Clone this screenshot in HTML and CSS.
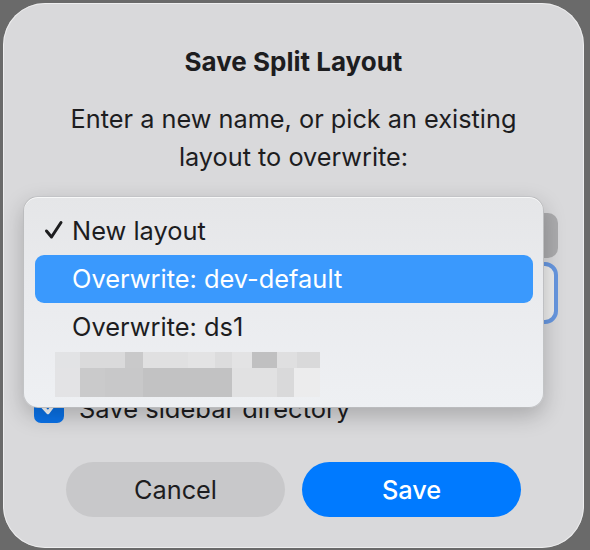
FILE: index.html
```html
<!DOCTYPE html>
<html lang="en">
<head>
    <meta charset="UTF-8">
    <meta name="viewport" content="width=device-width, initial-scale=1.0">
    <title>Save Split Layout</title>
    <link rel="stylesheet" href="styles.css">
</head>
<body>
    <div class="dialog">
        <h1 class="title">Save Split Layout</h1>
        <p class="message">Enter a new name, or pick an existing<br>layout to overwrite:</p>

        <div class="controls">
            <div class="popup-button"></div>
            <div class="name-field"></div>
            <div class="check-row faded">
                <span class="checkbox"></span>
            </div>
            <label class="check-row">
                <span class="checkbox">
                    <svg width="30" height="30" viewBox="0 0 30 30"><path d="M8.5 13.5 L14 19.5 L21.5 9.5" fill="none" stroke="#fff" stroke-width="3.4" stroke-linecap="round" stroke-linejoin="round"/></svg>
                </span>
                <span>Save sidebar directory</span>
            </label>
        </div>

        <div class="buttons">
            <button class="btn btn-cancel">Cancel</button>
            <button class="btn btn-save">Save</button>
        </div>

        <!-- open popup menu, drawn over the form -->
        <div class="menu">
            <div class="menu-item">
                <svg class="tick" width="20" height="20" viewBox="0 0 20 20"><path d="M2.5 11 L7.5 17 L17 2.5" fill="none" stroke="#1d1d1f" stroke-width="3" stroke-linecap="round" stroke-linejoin="round"/></svg>
                New layout
            </div>
            <div class="menu-item active">Overwrite: dev-default</div>
            <div class="menu-item">Overwrite: ds1</div>
            <div class="redacted">
                <div class="redacted-top"></div>
                <div class="redacted-bottom"></div>
            </div>
        </div>
    </div>
</body>
</html>
```

FILE: styles.css
```css
body {
    margin: 0;
    padding: 3px;
    background-color: #6a6a6a;
    font-family: 'Inter', 'Noto Sans', sans-serif;
    color: #1d1d1f;
}

.dialog {
    position: relative;
    box-sizing: border-box;
    width: 581px;
    height: 545px;
    padding-top: 46px;
    background-color: #d9d9db;
    border-radius: 42px;
    box-shadow: inset 0 0 0 1px rgba(255, 255, 255, 0.55);
    display: flex;
    flex-direction: column;
    align-items: center;
}

.title {
    margin: 0;
    font-size: 26px;
    line-height: 26px;
    font-weight: 700;
}

.message {
    margin: 25px 0 0;
    font-size: 25.3px;
    line-height: 38px;
    text-align: center;
}

.controls {
    align-self: stretch;
    margin: 37px 26px 0 27px;
    display: flex;
    flex-direction: column;
}

.popup-button {
    height: 45px;
    border-radius: 10px;
    background-color: #ababad;
}

.name-field {
    margin-top: 4px;
    height: 54px;
    border: 4px solid #6797e0;
    border-radius: 13px;
    background-color: #ececec;
}

.check-row {
    display: flex;
    align-items: center;
    gap: 15px;
    margin-left: 4px;
    height: 30px;
    font-size: 25.5px;
}

.check-row.faded {
    margin-top: 18px;
}

.check-row + .check-row {
    margin-top: 21px;
}

.checkbox {
    width: 30px;
    height: 30px;
    border-radius: 7px;
    background-color: #0a72e8;
    display: flex;
}

.faded .checkbox {
    background-color: #a9d1f7;
}

.buttons {
    display: flex;
    gap: 17px;
    margin-top: 39px;
}

.btn {
    width: 219px;
    height: 55px;
    border: none;
    border-radius: 28px;
    font-family: inherit;
    font-size: 25.3px;
}

.btn-cancel {
    background-color: #c8c8ca;
    color: #1d1d1f;
}

.btn-save {
    background-color: #007aff;
    color: #fff;
    font-weight: 500;
}

.menu {
    position: absolute;
    left: 20px;
    top: 193px;
    box-sizing: border-box;
    width: 521px;
    height: 212px;
    padding: 10px 10px 0 11px;
    border-radius: 15px;
    border: 1px solid rgba(0, 0, 0, 0.18);
    background: linear-gradient(to bottom, #e5e6e8 0%, #eaebee 45%, #eef0f3 100%);
    box-shadow: 0 8px 22px rgba(0, 0, 0, 0.22), inset 0 1px 0 rgba(255, 255, 255, 0.7);
}

.menu-item {
    position: relative;
    height: 48px;
    padding-left: 37px;
    font-size: 25.4px;
    line-height: 48px;
    border-radius: 9px;
}

.menu-item .tick {
    position: absolute;
    left: 9px;
    top: 13px;
}

.menu-item.active {
    background-color: #3a99fd;
    color: #fff;
}

.redacted {
    margin: 1px 0 0 20px;
    width: 265px;
}

.redacted-top {
    height: 16px;
    background: linear-gradient(to right,
        #e2e3e5 0 25px, #dadadb 25px 70px, #c9c9ca 70px 88px,
        #e0e0e1 88px 133px, #e3e3e4 133px 160px, #dcdcdd 160px 177px,
        #e3e3e4 177px 197px, #c0c0c1 197px 222px, #dfdfe0 222px 242px,
        #d9d9da 242px 265px);
}

.redacted-bottom {
    height: 29px;
    background: linear-gradient(to right,
        #e3e3e5 0 25px, #cacacb 25px 50px, #c8c8c9 50px 88px,
        #c2c2c3 88px 177px, #e1e1e2 177px 222px, #d9d9da 222px 239px,
        #ececed 239px 265px);
}
```
